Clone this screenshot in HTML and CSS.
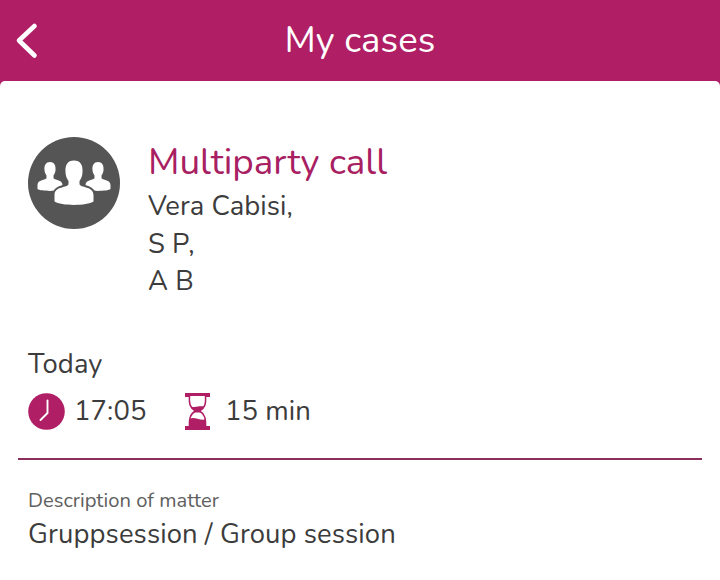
FILE: index.html
```html
<!DOCTYPE html>
<html lang="en">
<head>
    <meta charset="UTF-8">
    <meta name="viewport" content="width=device-width, initial-scale=1.0">
    <title>My cases</title>
    <link rel="stylesheet" href="styles.css">
</head>
<body>

<header class="topbar">
    <button class="back" aria-label="Back">
        <svg width="24" height="38" viewBox="0 0 24 38">
            <path d="M19.500 4L4 18.500L19.500 33.500" fill="none" stroke="#fff" stroke-width="4.600" stroke-linecap="round" stroke-linejoin="round"/>
        </svg>
    </button>
    <h1>My cases</h1>
</header>

<main class="case">
    <section class="call">
        <svg width="92" height="92" viewBox="0 0 92 92">
            <circle cx="46" cy="46" r="46" fill="#555"/>
            <g fill="#fff">
                <path id="person" d="M22 25C26 25 28 28 27.500 33C27.500 35 26.500 37 25.500 38.500V41C26 43 34.500 42.500 34.500 48V52C31 54.500 13 54.500 9.500 52V48C9.500 42.500 18 43 18.500 41V38.500C17.500 37 16.500 35 16.500 33C16 28 18 25 22 25Z"/>
                <use href="#person" x="48"/>
            </g>
            <path d="M46 23.500C52.500 23.500 55 28 54.500 35C54.500 39 53 42 51.500 44V47C52 51 65.500 49 65.500 58V64.500C59 69 33 69 26.500 64.500V58C26.500 49 40 51 40.500 47V44C39 42 37.500 39 37.500 35C37 28 39.500 23.500 46 23.500Z" fill="#fff" stroke="#555" stroke-width="4" paint-order="stroke"/>
        </svg>
        <div class="call-info">
            <h2>Multiparty call</h2>
            <p>Vera Cabisi,</p>
            <p>S P,</p>
            <p>A B</p>
        </div>
    </section>

    <section class="schedule">
        <p class="day">Today</p>
        <div class="times">
            <svg width="37" height="37" viewBox="0 0 37 37">
                <circle cx="18.500" cy="18.500" r="18.300" fill="#b01e65"/>
                <path d="M19.500 7.500V20L12.500 27" fill="none" stroke="#fff" stroke-width="1.900" stroke-linecap="round"/>
            </svg>
            <span class="start">17:05</span>
            <svg width="25" height="37" viewBox="0 0 25 37">
                <path d="M0 0H25V4H0ZM0 33H25V37H0Z" fill="#b01e65"/>
                <path d="M4.500 3C4 11 5 15 10.500 18C5 21 4 26 4.500 34H20.500C21 26 20 21 14.500 18C20 15 21 11 20.500 3" fill="#fff" stroke="#b01e65" stroke-width="1.500"/>
                <path d="M6 13.500C11 15 14 12.500 19 13.500L15 18L17 19.500H8L10 18ZM4.500 26C9 23 13 27.500 20.500 26.500V34H4.500Z" fill="#b01e65"/>
            </svg>
            <span class="duration">15 min</span>
        </div>
    </section>

    <hr>

    <section class="matter">
        <p class="label">Description of matter</p>
        <p class="value">Gruppsession / Group session</p>
    </section>
</main>

</body>
</html>
```
FILE: styles.css
```css
* {
    box-sizing: border-box;
}
body {
    margin: 0;
    height: 580px;
    overflow: hidden;
    background: #b01e65;
    color: #3c3c3c;
    font-family: Nunito, "Open Sans", sans-serif;
    font-size: 27.400px;
    font-weight: 380;
    letter-spacing: 0.100px;
}
h1, h2, p {
    margin: 0;
    font-weight: inherit;
    white-space: nowrap;
}
svg {
    display: block;
    flex: none;
}
.topbar {
    display: grid;
    grid-template-columns: 60px 1fr 60px;
    align-items: center;
    height: 81px;
    color: #fff;
}
.back {
    padding: 0;
    margin-left: 15px;
    border: none;
    background: none;
}
h1 {
    padding-bottom: 2px;
    font-size: 36.600px;
    line-height: 76px;
    text-align: center;
}
.case {
    height: 499px;
    padding: 56px 18px 0;
    background: #fff;
    border-radius: 5px 5px 0 0;
}
.call {
    display: flex;
    gap: 28px;
    padding-left: 10px;
}
.call-info p {
    line-height: 37.500px;
}
h2 {
    color: #a82061;
    font-size: 36.800px;
    line-height: 51px;
    letter-spacing: 0;
}
.schedule {
    padding: 44px 0 0 10px;
}
.day {
    line-height: 38px;
}
.times {
    display: flex;
    align-items: center;
    height: 37px;
    margin-top: 10px;
}
.start {
    width: 72px;
    margin: 0 39px 0 9px;
}
.duration {
    margin-left: 15px;
}
hr {
    height: 2px;
    margin: 28px 0 0;
    border: none;
    background: #8b2e5b;
}
.matter {
    padding: 27px 0 0 10px;
}
.label {
    color: #606060;
    font-size: 20.200px;
    line-height: 28px;
    letter-spacing: 0;
}
.value {
    line-height: 39px;
    letter-spacing: 0.120px;
}
```
